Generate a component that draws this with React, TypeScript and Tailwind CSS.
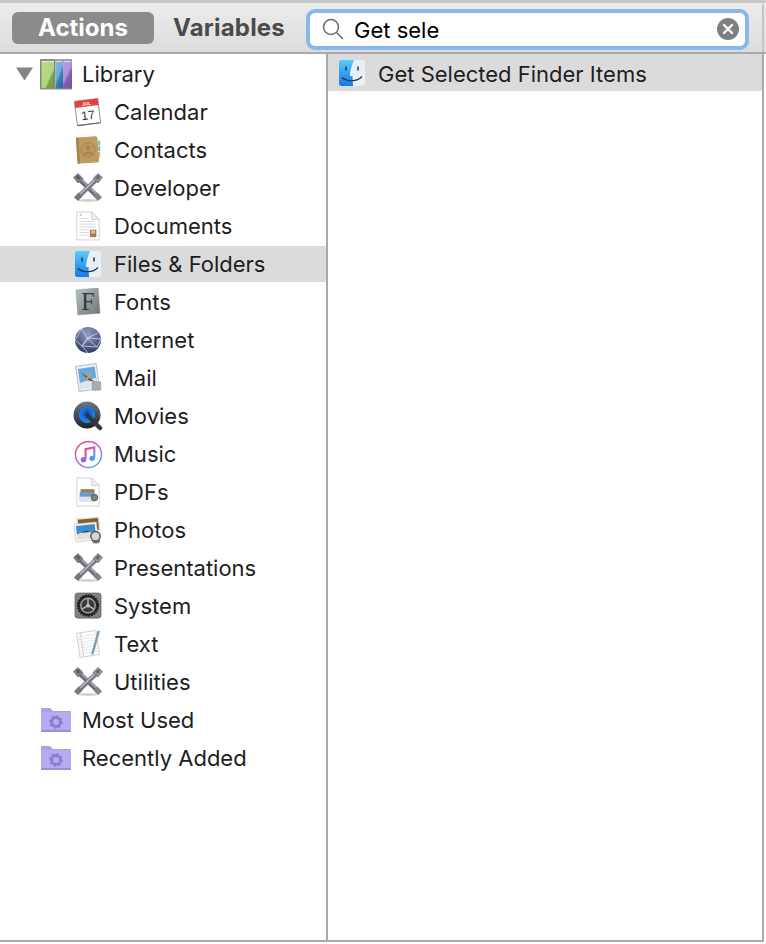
import React from "react";

const Tools = () => (
  <svg viewBox="0 0 30 30" className="w-[30px] h-[30px]">
    <ellipse cx="15" cy="27.500" rx="10" ry="1.500" fill="#d2d2d2" />
    <path d="M4 4 L26 25" stroke="#6f6b79" strokeWidth="4.500" />
    <path d="M5 3.500 L26.500 24" stroke="#aeaaba" strokeWidth="1.300" />
    <path d="M26 4 L4 25" stroke="#7c7886" strokeWidth="4.500" />
    <path d="M25.500 3.500 L4 24" stroke="#c2becd" strokeWidth="1.300" />
    <path d="M0.500 4.500 L5 0.500 L10 5.500 L5 10Z" fill="#827e8c" stroke="#605c69" strokeWidth="0.600" />
    <path d="M29.500 4.500 L25 0.500 L20 5.500 L25 10Z" fill="#96929f" stroke="#605c69" strokeWidth="0.600" />
    <path d="M3 3.500 L5 2 L7.500 5 L5 7Z" fill="#5d5966" />
    <path d="M27 3.500 L25 2 L22.500 5 L25 7Z" fill="#6a6673" />
    <path d="M1 24.500 L5 28 L9.500 23.500 L5.500 19.500Z" fill="#797582" />
    <path d="M29 24.500 L25 28 L20.500 23.500 L24.500 19.500Z" fill="#85818e" />
  </svg>
);
const Finder = ({ id }: { id: string }) => (
  <svg viewBox="0 0 28 28" className="w-[28px] h-[28px]">
    <defs>
      <linearGradient id={id} x1="0" y1="0" x2="0" y2="1">
        <stop offset="0" stopColor="#57cdf8" />
        <stop offset="1" stopColor="#1877ee" />
      </linearGradient>
    </defs>
    <rect x="1" y="1" width="26" height="26" rx="2.500" fill="#e9eff5" />
    <path d="M3.500 1 H16 C13.500 7 12.300 12 11.800 17 H14.500 L15 27 H3.500 A2.500 2.500 0 0 1 1 24.500 V3.500 A2.500 2.500 0 0 1 3.500 1Z" fill={`url(#${id})`} />
    <path d="M8 7.500 V11.500 M20 7.500 V11.500" stroke="#1c3550" strokeWidth="1.500" fill="none" />
    <path d="M4 18.500 C9 23 19 23 24 17.500" stroke="#1c3550" strokeWidth="1.200" fill="none" />
  </svg>
);
const Library = () => (
  <svg viewBox="0 0 32 32" className="w-[32px] h-[32px]">
    <defs>
      <linearGradient id="lg1" x1="0" y1="0" x2="1" y2="1">
        <stop offset="0" stopColor="#bcdc8a" />
        <stop offset="0.620" stopColor="#b2d580" />
        <stop offset="0.700" stopColor="#7ba64a" />
        <stop offset="1" stopColor="#6f9a40" />
      </linearGradient>
      <linearGradient id="lg2" x1="0" y1="0" x2="0.600" y2="1">
        <stop offset="0" stopColor="#86b5e3" />
        <stop offset="0.550" stopColor="#74a8dc" />
        <stop offset="0.700" stopColor="#3a7fb8" />
        <stop offset="1" stopColor="#2f6f9f" />
      </linearGradient>
      <linearGradient id="lg3" x1="0" y1="0" x2="0.600" y2="1">
        <stop offset="0" stopColor="#bda4e4" />
        <stop offset="0.550" stopColor="#ad90d9" />
        <stop offset="0.700" stopColor="#8060b4" />
        <stop offset="1" stopColor="#7655a8" />
      </linearGradient>
    </defs>
    <rect x="0" y="1" width="15.500" height="30" rx="1.500" fill="#7f8f6c" />
    <rect x="1.500" y="3" width="12.500" height="27" fill="url(#lg1)" />
    <rect x="15.500" y="2" width="7.500" height="29" fill="url(#lg2)" />
    <rect x="23" y="2" width="9" height="29" rx="1" fill="url(#lg3)" />
    <path d="M0 2 H32" stroke="#8f8f8f" strokeWidth="1.500" />
    <path d="M2 3.500 H14 M16 3.500 H22 M24 3.500 H31" stroke="#e5e5e5" strokeWidth="1" />
    <path d="M0 31 H32" stroke="#8f8f8f" strokeWidth="1" />
  </svg>
);
const Calendar = () => (
  <svg viewBox="0 0 32 32" className="w-[32px] h-[32px]">
    <g transform="rotate(-7 16 16)">
      <rect x="3" y="3" width="25" height="26" fill="#fdfdfd" stroke="#8e8e8e" />
      <rect x="3" y="3" width="25" height="7" fill="#e5403d" />
      <text x="15.500" y="8.800" textAnchor="middle" fontSize="5" fontWeight="700" fill="#fff" fontFamily="Liberation Sans">JUL</text>
      <text x="15.500" y="24" textAnchor="middle" fontSize="13" fill="#333" fontFamily="Liberation Sans">17</text>
    </g>
    <path d="M5 30.500 L29 27.500" stroke="#666" strokeWidth="1.200" />
  </svg>
);
const Contacts = () => (
  <svg viewBox="0 0 30 32" className="w-[28px] h-[30px]">
    <g transform="rotate(-4 14 16)">
      <rect x="3" y="2" width="23" height="28" rx="2" fill="#c09a63" />
      <rect x="3" y="2" width="2.500" height="28" fill="#a5804c" />
      <circle cx="15" cy="16" r="7.500" fill="none" stroke="#ab8650" strokeWidth="1.200" />
      <circle cx="15" cy="13.500" r="2.800" fill="#ab8650" />
      <path d="M9.500 21 C11 16 19 16 20.500 21Z" fill="#ab8650" />
    </g>
    <rect x="26" y="6" width="2" height="5" fill="#6bc18b" />
    <rect x="26" y="12" width="2" height="5" fill="#62a9d8" />
    <rect x="26" y="18" width="2" height="6" fill="#e9a63f" />
  </svg>
);
const Documents = () => (
  <svg viewBox="0 0 28 32" className="w-[26px] h-[30px]">
    <path d="M2 1 H18 L26 9 V31 H2Z" fill="#fff" stroke="#cfcfcf" />
    <path d="M18 1 V9 H26Z" fill="#efefef" stroke="#cfcfcf" />
    <path d="M5 8 H15 M5 11 H21 M5 14 H22 M5 17 H22 M5 20 H15 M5 23 H15 M5 26 H15" stroke="#cdcdcd" strokeWidth="0.800" />
    <rect x="5" y="3" width="2" height="2" fill="#eeb27a" />
    <rect x="16" y="20" width="7" height="8" fill="#a47d4f" />
    <rect x="17.500" y="21" width="4" height="3" fill="#d8c6a8" />
  </svg>
);
const Fonts = () => (
  <svg viewBox="0 0 28 30" className="w-[26px] h-[28px]">
    <defs>
      <linearGradient id="fg" x1="0" y1="0" x2="1" y2="1">
        <stop offset="0" stopColor="#b3c6ca" />
        <stop offset="1" stopColor="#6f7272" />
      </linearGradient>
    </defs>
    <path d="M1 2 L25 0 L27 27 L3 29Z" fill="url(#fg)" stroke="#8a8f90" strokeWidth="0.500" />
    <text x="14" y="24" textAnchor="middle" fontSize="26" fill="#33393b" fontFamily="Liberation Serif">F</text>
  </svg>
);
const Internet = () => (
  <svg viewBox="0 0 28 28" className="w-[28px] h-[28px]">
    <defs>
      <radialGradient id="ig" cx="0.500" cy="0.250" r="0.800">
        <stop offset="0" stopColor="#8e9cc4" />
        <stop offset="1" stopColor="#2c3560" />
      </radialGradient>
    </defs>
    <circle cx="14" cy="14" r="13" fill="url(#ig)" />
    <path d="M8 2.500 L13 12 L24 7 M13 12 L8 20 L14 27 M13 12 L23 21 M1 14 L8 20 L23 21 L27 13 M13 12 L27 13 M8 2.500 L1 14 M8 20 L17 10" stroke="#d3d9ea" strokeWidth="0.800" fill="none" />
  </svg>
);
const Mail = () => (
  <svg viewBox="0 0 30 32" className="w-[29px] h-[30px]">
    <g transform="rotate(-8 14 15)">
      <rect x="3" y="2" width="22" height="27" fill="#eef1f5" stroke="#b9b9b9" />
      <rect x="5" y="5" width="18" height="21" fill="#6ba7df" />
      <path d="M5 26 L5 20 L23 17 V26Z" fill="#d9e8f5" />
      <path d="M7 9 L14 14 L21 21 L15 19 L11 14Z" fill="#7c5a30" />
      <path d="M11 18 L18 9 L17 16Z" fill="#c9a25f" />
    </g>
    <rect x="19" y="20" width="9" height="9" rx="1" fill="#a8adb1" stroke="#777" strokeWidth="0.500" />
  </svg>
);
const Movies = () => (
  <svg viewBox="0 0 30 30" className="w-[30px] h-[30px]">
    <defs>
      <linearGradient id="qg" x1="0" y1="0" x2="0" y2="1">
        <stop offset="0" stopColor="#6a7a88" />
        <stop offset="1" stopColor="#1f2226" />
      </linearGradient>
      <radialGradient id="qb" cx="0.500" cy="0.400" r="0.600">
        <stop offset="0" stopColor="#0a4cc0" />
        <stop offset="1" stopColor="#1e90f5" />
      </radialGradient>
    </defs>
    <circle cx="14" cy="14" r="13.500" fill="url(#qg)" />
    <circle cx="14" cy="14" r="8" fill="url(#qb)" />
    <path d="M14 14 L27 27" stroke="#33373c" strokeWidth="4.500" strokeLinecap="round" />
  </svg>
);
const Music = () => (
  <svg viewBox="0 0 30 30" className="w-[29px] h-[29px]">
    <defs>
      <linearGradient id="mg" x1="0.200" y1="0" x2="0.800" y2="1">
        <stop offset="0" stopColor="#f0496d" />
        <stop offset="0.500" stopColor="#b660d8" />
        <stop offset="1" stopColor="#4ab5ee" />
      </linearGradient>
    </defs>
    <circle cx="15" cy="15" r="13.500" fill="#fff" stroke="url(#mg)" strokeWidth="1.500" />
    <path d="M12 20 V9.500 L21 7.500 V18.500" fill="none" stroke="url(#mg)" strokeWidth="2.200" />
    <circle cx="9.800" cy="20.500" r="2.800" fill="#8d6fe0" />
    <circle cx="18.800" cy="19" r="2.800" fill="#5b95ea" />
  </svg>
);
const Pdfs = () => (
  <svg viewBox="0 0 28 32" className="w-[26px] h-[30px]">
    <path d="M2 1 H18 L26 9 V31 H2Z" fill="#fff" stroke="#cfcfcf" />
    <path d="M18 1 V9 H26Z" fill="#f2f2f2" stroke="#cfcfcf" />
    <rect x="6" y="13" width="15" height="4" fill="#9a7c55" />
    <rect x="5" y="16" width="16" height="10" fill="#6f9bc9" />
    <rect x="5" y="21" width="16" height="5" fill="#e3e6e9" />
    <circle cx="21" cy="22" r="3.500" fill="#8a8578" stroke="#555" />
  </svg>
);
const Photos = () => (
  <svg viewBox="0 0 32 30" className="w-[31px] h-[29px]">
    <g transform="rotate(-5 14 10)">
      <rect x="5" y="2" width="23" height="14" fill="#8a5c28" stroke="#ddd" strokeWidth="1.500" />
    </g>
    <g transform="rotate(-6 14 17)">
      <rect x="2" y="7" width="24" height="19" fill="#f5f5f5" stroke="#bbb" strokeWidth="0.600" />
      <rect x="4" y="9" width="20" height="8" fill="#3f8bd0" />
      <rect x="4" y="17" width="20" height="7" fill="#e7e1d3" />
      <path d="M4 18 L15 15 L24 20 V17 H4Z" fill="#1f4f8a" />
    </g>
    <circle cx="24" cy="21" r="5" fill="#cfd6da" stroke="#58504a" strokeWidth="1.500" />
    <path d="M20 25 C20 30 29 30 29 25 Z" fill="#75685a" />
  </svg>
);
const SystemIcon = () => (
  <svg viewBox="0 0 30 30" className="w-[28px] h-[28px]">
    <rect x="1" y="1" width="28" height="27" rx="3" fill="#7c8282" stroke="#555" strokeWidth="0.600" />
    <circle cx="15" cy="14.500" r="11" fill="#2a2a2a" stroke="#1a1a1a" strokeDasharray="2 1" strokeWidth="2" />
    <circle cx="15" cy="14.500" r="8.500" fill="#a2a2a2" />
    <circle cx="15" cy="14.500" r="7" fill="#3a3a3a" />
    <path d="M15 14.500 V7.500 M15 14.500 L9 18 M15 14.500 L21 18" stroke="#c4c4c4" strokeWidth="1.500" />
    <circle cx="15" cy="14.500" r="2" fill="#c4c4c4" />
  </svg>
);
const TextIcon = () => (
  <svg viewBox="0 0 28 32" className="w-[27px] h-[30px]">
    <g transform="rotate(-8 13 16)">
      <rect x="3" y="3" width="21" height="26" fill="#fdfdfd" stroke="#d0d0d0" />
      <path d="M3 7 H24 M3 10 H24 M3 13 H24 M3 16 H24 M3 19 H24 M3 22 H24 M3 25 H24" stroke="#d8dfe8" strokeWidth="0.700" />
      <path d="M7 3 V29" stroke="#f0a8a8" strokeWidth="0.700" />
    </g>
    <path d="M25 2 L18 27" stroke="#7f9cb0" strokeWidth="2.500" />
  </svg>
);
const Folder = () => (
  <svg viewBox="0 0 32 26" className="w-[32px] h-[26px]">
    <path d="M1 2 A1 1 0 0 1 2 1 H10 L13 4 H30 A1 1 0 0 1 31 5 V8 H1Z" fill="#ab9fe8" />
    <rect x="1" y="5" width="30" height="20" rx="1" fill="#b6abf0" />
    <path d="M1 24 H31" stroke="#9085cc" strokeWidth="1.500" />
    <circle cx="16" cy="15" r="4.500" fill="none" stroke="#8b7dd4" strokeWidth="3" />
    <circle cx="16" cy="15" r="6.200" fill="none" stroke="#8b7dd4" strokeWidth="1.600" strokeDasharray="2 2.800" />
  </svg>
);

const children: [string, React.ReactNode, boolean?][] = [
  ["Calendar", <Calendar />],
  ["Contacts", <Contacts />],
  ["Developer", <Tools />],
  ["Documents", <Documents />],
  ["Files & Folders", <Finder id="fa" />, true],
  ["Fonts", <Fonts />],
  ["Internet", <Internet />],
  ["Mail", <Mail />],
  ["Movies", <Movies />],
  ["Music", <Music />],
  ["PDFs", <Pdfs />],
  ["Photos", <Photos />],
  ["Presentations", <Tools />],
  ["System", <SystemIcon />],
  ["Text", <TextIcon />],
  ["Utilities", <Tools />],
];

function Row({ icon, label, selected, indent }: { icon: React.ReactNode; label: string; selected?: boolean; indent: "top" | "child" }) {
  return (
    <div className={`h-[38px] flex items-center ${selected ? "bg-[linear-gradient(#fff_0_1px,#dbdbdb_1px_37px,#fff_37px)]" : ""} ${indent === "top" ? "pl-[40px]" : "pl-[73px]"}`}>
      <div className={`flex items-center justify-center shrink-0 ${indent === "top" ? "w-[32px]" : "w-[30px]"}`}>{icon}</div>
      <span className={`text-[22px] leading-none text-[#1e1e1e] whitespace-nowrap ${indent === "top" ? "ml-[10px]" : "ml-[11px]"}`}>{label}</span>
    </div>
  );
}

export default function App() {
  return (
    <div className="w-[766px] h-[944px] bg-white flex flex-col overflow-hidden font-['Inter',sans-serif] relative">
      <div className="h-[4px] bg-[linear-gradient(#c9c9c9_0_3px,#e8e8e8_3px)] shrink-0" />
      <div className="h-[48px] shrink-0 bg-[linear-gradient(#ececec,#dcdcdc)] flex items-center pl-[12px] border-b-[2px] border-[#a9a9a9] box-content">
        <div className="w-[142px] h-[32px] rounded-[6px] bg-[#8b8b8b] flex items-center justify-center text-white font-bold text-[24px]">Actions</div>
        <div className="ml-[19px] w-[113px] text-[#4a4a4a] font-bold text-[24px] tracking-[0.2px] whitespace-nowrap">Variables</div>
        <div className="ml-[24px] mt-[2px] w-[435px] h-[33px] rounded-[5px] bg-white ring-[4px] ring-[#8ab7ea] flex items-center pl-[11px] pr-[6px] text-black text-[22px]">
          <svg viewBox="0 0 24 24" className="w-[24px] h-[24px] shrink-0" fill="none" stroke="#6a6a6a" strokeWidth="1.500">
            <circle cx="10" cy="10" r="7.500" />
            <path d="M15.500 15.500 L22 22" />
          </svg>
          <span className="ml-[9px] flex-1 leading-none pt-[2px]">Get sele</span>
          <div className="w-[22px] h-[22px] rounded-full bg-[#7f7f7f] flex items-center justify-center shrink-0">
            <svg viewBox="0 0 12 12" className="w-[12px] h-[12px]" stroke="#fff" strokeWidth="2.400" strokeLinecap="round">
              <path d="M2 2 L10 10 M10 2 L2 10" />
            </svg>
          </div>
        </div>
      </div>
      <div className="flex-1 flex min-h-0 pb-[2px]">
        <div className="w-[328px] shrink-0 border-r-[2px] border-[#a9a9a9] pt-[1px]">
          <div className="relative">
            <svg viewBox="0 0 18 14" className="absolute left-[16px] top-[12px] w-[17px] h-[14px]">
              <path d="M0 0 H18 L9 14Z" fill="#858585" />
            </svg>
            <Row icon={<Library />} label="Library" indent="top" />
          </div>
          {children.map(([label, icon, selected]) => (
            <Row key={label} icon={icon} label={label} selected={selected} indent="child" />
          ))}
          <Row icon={<Folder />} label="Most Used" indent="top" />
          <Row icon={<Folder />} label="Recently Added" indent="top" />
        </div>
        <div className="w-[436px] shrink-0 border-r-[2px] border-[#a9a9a9]">
          <div className="h-[37px] bg-[#dbdbdb] flex items-center pl-[10px]">
            <Finder id="fb" />
            <span className="ml-[12px] text-[22px] leading-none pt-[3px] text-[#1e1e1e] whitespace-nowrap">Get Selected Finder Items</span>
          </div>
        </div>
      </div>
      <div className="absolute left-[762px] top-[4px] w-[2px] h-[48px] bg-[#c4c4c4]" />
      <div className="absolute left-0 top-[940px] w-[764px] h-[2px] bg-[#a9a9a9]" />
    </div>
  );
}
